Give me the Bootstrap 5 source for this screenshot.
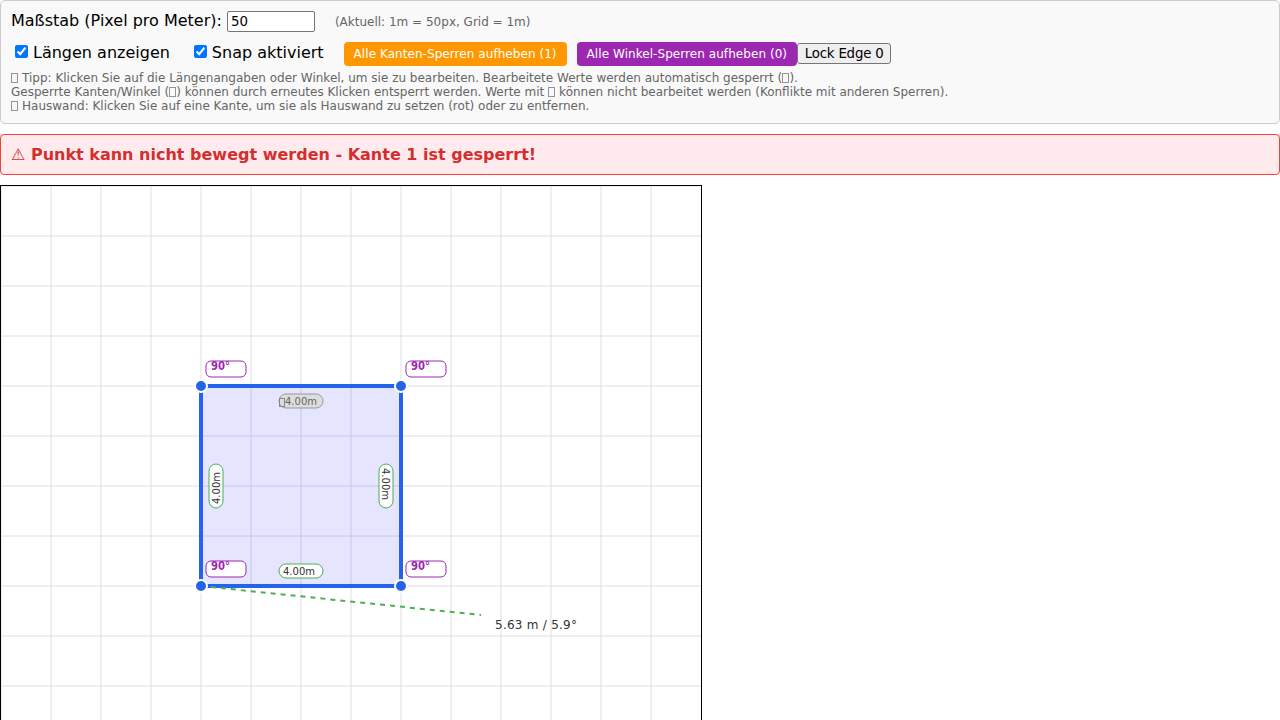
<!DOCTYPE html>
<html lang="de">
<head>
<meta charset="utf-8">
<meta name="viewport" content="width=device-width, initial-scale=1">
<title>Grundriss-Editor</title>
<link href="https://cdn.jsdelivr.net/npm/bootstrap@5.3.0/dist/css/bootstrap.min.css" rel="stylesheet">
<style>
  body { font-family: "DejaVu Sans", sans-serif; font-size: 16px; line-height: 19px; color: #000; background: #fff; }
  .panel { height: 124px; padding: 10px; background: #f9f9f9; border: 1px solid #ccc; border-radius: 5px; }
  .scale-label { height: 21px; }
  .scale-input { width: 88px; height: 21px; margin-left: 5px; padding: 1px 3px; border: 1px solid #767676; border-radius: 2px; background: #fff; font-size: 13.333px; line-height: 17px; color: #000; }
  .hint { margin-left: 20px; font-size: 12px; line-height: 14px; color: #666; }
  .option-row { height: 24px; margin-top: 10px; }
  .option { height: 20px; line-height: 21px; }
  .option input { width: 13px; height: 13px; margin: 3px 5px 0 4px; }
  .option + .option { margin-left: 20px; }
  .unlock { height: 24px; padding: 0 9.5px; border: 0; border-radius: 4px; font-size: 12px; line-height: 24px; letter-spacing: .06px; white-space: nowrap; color: #fff; }
  .unlock-edges { width: 223px; margin-left: 20px; background: #ff9800; }
  .unlock-angles { width: 220.5px; margin-left: 10px; background: #9c27b0; }
  .lock-edge { width: 94px; height: 21px; margin-top: 1px; padding: 0; border: 1px solid #767676; border-radius: 3px; background: #efefef; font-size: 13.333px; letter-spacing: -.2px; line-height: 19px; color: #000; }
  .tips { margin-top: 5px; font-size: 12px; line-height: 14px; color: #666; }
  .glyph-box { display: inline-block; width: 7px; height: 10px; margin: 0 .1px; border: 1px solid #949494; vertical-align: -1px; }
  .warning { height: 41px; margin: 10px 0; padding: 10px; border: 1px solid #f44336; border-radius: 4px; background: #ffebee; color: #d32f2f; font-weight: bold; }
  .board-area { min-height: 0; }
  .board { display: block; box-sizing: content-box; border: 1px solid #000; }
  .board text { font-family: "DejaVu Sans", sans-serif; font-size: 10px; fill: #333; }
  .board text.angle { font-size: 12px; font-weight: bold; fill: #9c27b0; }
  .board text.measure { font-size: 12px; letter-spacing: .25px; }
  .board text.blocked { fill: #666; }
</style>
</head>
<body class="vh-100 overflow-hidden d-flex flex-column">
<div class="panel flex-shrink-0">
  <div class="d-flex align-items-center">
    <label class="scale-label" for="scale">Maßstab (Pixel pro Meter):</label>
    <input id="scale" class="scale-input" type="text" value="50">
    <span class="hint">(Aktuell: 1m = 50px, Grid = 1m)</span>
  </div>
  <div class="d-flex align-items-start option-row">
    <label class="option d-flex align-items-start"><input type="checkbox" checked>Längen anzeigen</label>
    <label class="option d-flex align-items-start"><input type="checkbox" checked>Snap aktiviert</label>
    <button class="unlock unlock-edges" type="button">Alle Kanten-Sperren aufheben (1)</button>
    <button class="unlock unlock-angles" type="button">Alle Winkel-Sperren aufheben (0)</button>
    <button class="lock-edge" type="button">Lock Edge 0</button>
  </div>
  <div class="tips">
    <i class="glyph-box"></i> Tipp: Klicken Sie auf die Längenangaben oder Winkel, um sie zu bearbeiten. Bearbeitete Werte werden automatisch gesperrt (<i class="glyph-box"></i>).<br>
    Gesperrte Kanten/Winkel (<i class="glyph-box"></i>) können durch erneutes Klicken entsperrt werden. Werte mit <i class="glyph-box"></i> können nicht bearbeitet werden (Konflikte mit anderen Sperren).<br>
    <i class="glyph-box"></i> Hauswand: Klicken Sie auf eine Kante, um sie als Hauswand zu setzen (rot) oder zu entfernen.
  </div>
</div>
<div class="warning flex-shrink-0">⚠ Punkt kann nicht bewegt werden - Kante 1 ist gesperrt!</div>
<div class="board-area flex-fill overflow-hidden">
<svg class="board" width="700" height="700" viewBox="0 0 700 700">
  <path stroke="#e0e0e0" d="M0 0V700M50 0V700M100 0V700M150 0V700M200 0V700M250 0V700M300 0V700M350 0V700M400 0V700M450 0V700M500 0V700M550 0V700M600 0V700M650 0V700M0 0H700M0 50H700M0 100H700M0 150H700M0 200H700M0 250H700M0 300H700M0 350H700M0 400H700M0 450H700M0 500H700M0 550H700M0 600H700M0 650H700"/>
  <rect x="200" y="200" width="200" height="200" fill="#0000ff" fill-opacity=".1"/>
  <rect x="200" y="200" width="200" height="200" fill="none" stroke="#2563eb" stroke-width="4"/>
  <path d="M200 400L480 429" stroke="#4caf50" stroke-width="2" stroke-dasharray="5 5"/>
  <g fill="#2563eb" stroke="#fff" stroke-width="2">
    <circle cx="200" cy="200" r="6"/><circle cx="400" cy="200" r="6"/>
    <circle cx="400" cy="400" r="6"/><circle cx="200" cy="400" r="6"/>
  </g>
  <g fill="#fff" stroke="#9c27b0" stroke-width="1">
    <rect x="205" y="175" width="40" height="16" rx="5"/><rect x="405" y="175" width="40" height="16" rx="5"/>
    <rect x="405" y="375" width="40" height="16" rx="5"/><rect x="205" y="375" width="40" height="16" rx="5"/>
  </g>
  <text class="angle" x="210" y="184" textLength="19" lengthAdjust="spacingAndGlyphs">90°</text>
  <text class="angle" x="410" y="184" textLength="19" lengthAdjust="spacingAndGlyphs">90°</text>
  <text class="angle" x="410" y="384" textLength="19" lengthAdjust="spacingAndGlyphs">90°</text>
  <text class="angle" x="210" y="384" textLength="19" lengthAdjust="spacingAndGlyphs">90°</text>
  <g>
    <rect x="278" y="208" width="44" height="14" rx="7" fill="#ddd" stroke="#999"/>
    <rect x="278.5" y="212.5" width="5" height="8" fill="none" stroke="#888"/>
    <text class="blocked" x="284" y="219">4.00m</text>
  </g>
  <g transform="translate(385 300) rotate(90)">
    <rect x="-22" y="-7" width="44" height="14" rx="7" fill="#fff" stroke="#4caf50"/>
    <text x="-18" y="4">4.00m</text>
  </g>
  <g>
    <rect x="278" y="378" width="44" height="14" rx="7" fill="#fff" stroke="#4caf50"/>
    <text x="282" y="389">4.00m</text>
  </g>
  <g transform="translate(215 300) rotate(-90)">
    <rect x="-22" y="-7" width="44" height="14" rx="7" fill="#fff" stroke="#4caf50"/>
    <text x="-18" y="4">4.00m</text>
  </g>
  <text class="measure" x="494" y="443">5.63 m / 5.9°</text>
</svg>
</div>
<script src="https://cdn.jsdelivr.net/npm/bootstrap@5.3.0/dist/js/bootstrap.bundle.min.js"></script>
</body>
</html>
